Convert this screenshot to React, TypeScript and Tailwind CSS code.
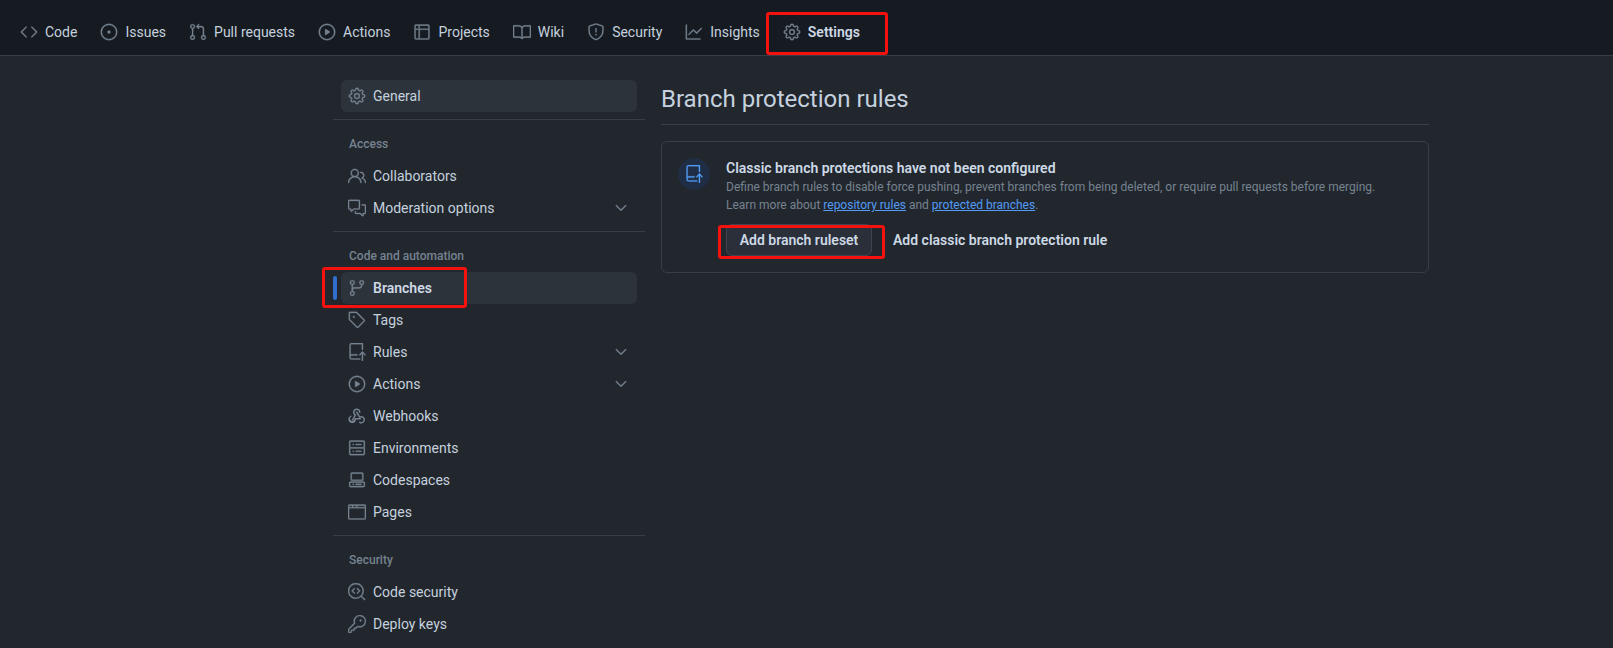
import type { IconType } from 'react-icons';
import {
  GoBook,
  GoBrowser,
  GoChevronDown,
  GoCode,
  GoCodescan,
  GoCodespaces,
  GoCommentDiscussion,
  GoGear,
  GoGitBranch,
  GoGitPullRequest,
  GoGraph,
  GoIssueOpened,
  GoKey,
  GoPeople,
  GoPlay,
  GoRepoPush,
  GoServer,
  GoShield,
  GoTable,
  GoTag,
} from 'react-icons/go';

type Tab = { icon: IconType; label: string; active?: boolean };
type Item = { icon: IconType; label: string; chevron?: boolean; selected?: boolean; active?: boolean };

// react-icons has no octicon webhook
const WebhookIcon = ((props: { className?: string }) => (
  <svg viewBox="-1 -1 18 18" fill="currentColor" className={props.className}>
    <path d="M5.5 4.25a2.25 2.25 0 0 1 4.5 0 .75.75 0 0 0 1.5 0 3.75 3.75 0 1 0-6.14 2.889l-2.272 4.258a.75.75 0 0 0 1.324.706L7 7.25a.75.75 0 0 0-.309-1.015A2.25 2.25 0 0 1 5.5 4.25Z" />
    <path d="M7.364 3.607a.75.75 0 0 1 1.03.257l2.608 4.349a3.75 3.75 0 1 1-.628 6.785.75.75 0 0 1 .752-1.299 2.25 2.25 0 1 0-.033-3.88.75.75 0 0 1-1.03-.256L7.107 4.636a.75.75 0 0 1 .257-1.03Z" />
    <path d="M2.469 7.64a.75.75 0 0 1-.292 1.02 2.25 2.25 0 1 0 3.323 1.976.75.75 0 0 1 .75-.75h5a.75.75 0 0 1 0 1.5H6.93A3.751 3.751 0 1 1 1.449 7.93a.75.75 0 0 1 1.02-.29Z" />
  </svg>
)) as IconType;

const tabs: Tab[] = [
  { icon: GoCode, label: 'Code' },
  { icon: GoIssueOpened, label: 'Issues' },
  { icon: GoGitPullRequest, label: 'Pull requests' },
  { icon: GoPlay, label: 'Actions' },
  { icon: GoTable, label: 'Projects' },
  { icon: GoBook, label: 'Wiki' },
  { icon: GoShield, label: 'Security' },
  { icon: GoGraph, label: 'Insights' },
  { icon: GoGear, label: 'Settings', active: true },
];

const accessItems: Item[] = [
  { icon: GoPeople, label: 'Collaborators' },
  { icon: GoCommentDiscussion, label: 'Moderation options', chevron: true },
];

const codeItems: Item[] = [
  { icon: GoGitBranch, label: 'Branches', selected: true, active: true },
  { icon: GoTag, label: 'Tags' },
  { icon: GoRepoPush, label: 'Rules', chevron: true },
  { icon: GoPlay, label: 'Actions', chevron: true },
  { icon: WebhookIcon, label: 'Webhooks' },
  { icon: GoServer, label: 'Environments' },
  { icon: GoCodespaces, label: 'Codespaces' },
  { icon: GoBrowser, label: 'Pages' },
];

const securityItems: Item[] = [
  { icon: GoCodescan, label: 'Code security' },
  { icon: GoKey, label: 'Deploy keys' },
];

function SideItem({ item }: { item: Item }) {
  const Icon = item.icon;
  return (
    <div className={`relative mx-2 flex h-8 items-center rounded-md px-2 ${item.selected ? 'bg-[#2d333b]' : ''}`}>
      {item.active && <span className="absolute left-[-8px] top-1 h-6 w-1 rounded-md bg-[#316dca]" />}
      <Icon className="-ml-px mr-[7px] h-[18px] w-[18px] shrink-0 stroke-[0.4] text-[#768390]" />
      <span className={`flex-1 text-sm ${item.active ? 'font-semibold text-[#cdd9e5]' : 'text-[#c5d1de]'}`}>{item.label}</span>
      {item.chevron && <GoChevronDown className="-mr-px h-[18px] w-[18px] stroke-[0.4] text-[#768390]" />}
    </div>
  );
}

function SideGroup({ title, items }: { title: string; items: Item[] }) {
  return (
    <>
      <div className="mt-[7px] h-px bg-[#373e47]" />
      <div className="flex h-10 items-center px-4 pt-2 text-xs font-medium text-[#768390]">{title}</div>
      {items.map((item) => (
        <SideItem key={item.label} item={item} />
      ))}
    </>
  );
}

export default function App() {
  return (
    <div className="relative h-[648px] overflow-hidden bg-[#22272e] font-['Roboto',sans-serif] text-[#c5d1de]">
      <nav className="flex h-[56px] items-center gap-2 border-b border-[#373e47] bg-[#161b22] pl-[13px] pt-2">
        {tabs.map((tab) => {
          const Icon = tab.icon;
          return (
            <div key={tab.label} className="flex h-8 items-center px-2 text-sm">
              <Icon className="-ml-px mr-[7px] h-[18px] w-[18px] stroke-[0.4] text-[#768390]" />
              <span className={tab.active ? 'font-semibold text-[#cdd9e5]' : 'text-[#c5d1de]'}>{tab.label}</span>
            </div>
          );
        })}
      </nav>

      <div className="flex pl-[333px] pt-6">
        <aside className="w-[312px] shrink-0">
          <SideItem item={{ icon: GoGear, label: 'General', selected: true }} />
          <SideGroup title="Access" items={accessItems} />
          <SideGroup title="Code and automation" items={codeItems} />
          <SideGroup title="Security" items={securityItems} />
        </aside>

        <main className="ml-4 w-[768px]">
          <h1 className="h-[45px] border-b border-[#373e47] text-2xl font-normal leading-[38px] text-[#c5d1de]">
            Branch protection rules
          </h1>
          <section className="mt-4 flex h-[132px] rounded-md border border-[#373e47] px-4 pt-4">
            <div className="flex h-8 w-8 shrink-0 items-center justify-center rounded-full bg-[#1f2e45]">
              <GoRepoPush className="h-[18px] w-[18px] stroke-[0.4] text-[#539bf5]" />
            </div>
            <div className="ml-4">
              <h2 className="text-sm font-semibold leading-5 text-[#cdd9e5]">Classic branch protections have not been configured</h2>
              <p className="whitespace-nowrap text-xs leading-[18px] text-[#768390]">
                Define branch rules to disable force pushing, prevent branches from being deleted, or require pull requests before merging.
                <br />
                Learn more about <a className="text-[#539bf5] underline">repository rules</a> and{' '}
                <a className="text-[#539bf5] underline">protected branches</a>.
              </p>
              <div className="mt-[10px] flex items-center gap-[21px]">
                <button className="h-8 w-[146px] rounded-md border border-[#3d444d] bg-[#2a2f39] text-sm font-semibold text-[#cdd9e5]">
                  Add branch ruleset
                </button>
                <span className="text-sm font-semibold text-[#cdd9e5]">Add classic branch protection rule</span>
              </div>
            </div>
          </section>
        </main>
      </div>

      {/* red annotation boxes */}
      <div className="absolute left-[766px] top-[12px] h-[43px] w-[122px] rounded-[3px] border-[3px] border-[#f5120e]" />
      <div className="absolute left-[322px] top-[267px] h-[41px] w-[145px] rounded-[3px] border-[3px] border-[#f5120e]" />
      <div className="absolute left-[718px] top-[225px] h-[34px] w-[167px] rounded-[3px] border-[3px] border-[#f5120e]" />
    </div>
  );
}
